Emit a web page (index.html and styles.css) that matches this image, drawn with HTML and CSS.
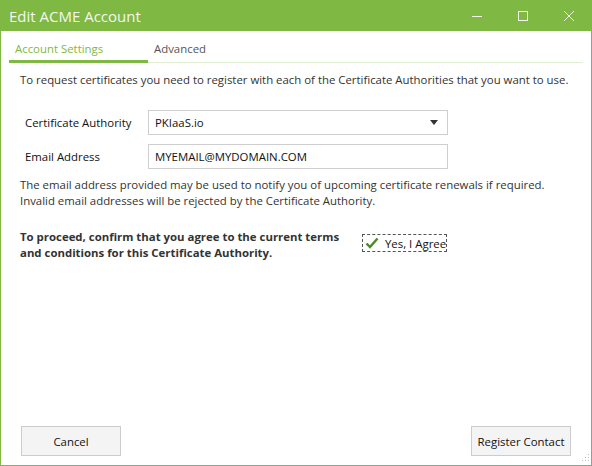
FILE: index.html
```html
<!DOCTYPE html>
<html lang="en">
<head>
    <meta charset="UTF-8">
    <meta name="viewport" content="width=device-width, initial-scale=1.0">
    <title>Edit ACME Account</title>
    <link rel="stylesheet" href="styles.css">
</head>
<body>

<div id="window">
    <div id="titlebar">
        <div class="title">Edit ACME Account</div>
        <div class="winbtns">
            <svg class="winbtn" width="12" height="12" viewBox="0 0 12 12"><path d="M1 6.5h10" stroke="#f3f7ee" stroke-width="1"/></svg>
            <svg class="winbtn" width="12" height="12" viewBox="0 0 12 12"><rect x="1.5" y="1.5" width="9" height="9" fill="none" stroke="#f3f7ee" stroke-width="1"/></svg>
            <svg class="winbtn" width="12" height="12" viewBox="0 0 12 12"><path d="M1 1l10 10M11 1L1 11" stroke="#f3f7ee" stroke-width="1"/></svg>
        </div>
    </div>

    <div id="tabs">
        <div class="tab active">Account Settings</div>
        <div class="tab">Advanced</div>
    </div>

    <div id="content">
        <div class="intro">
            To request certificates you need to register with each of the Certificate Authorities that you want to use.
        </div>

        <div class="form">
            <div class="row">
                <div class="lable">Certificate Authority</div>
                <div class="field select">
                    <span>PKIaaS.io</span>
                    <svg width="8" height="5" viewBox="0 0 8 5"><path d="M0 0h8L4 5z" fill="#333"/></svg>
                </div>
            </div>
            <div class="row">
                <div class="lable">Email Address</div>
                <div class="field">MYEMAIL@MYDOMAIN.COM</div>
            </div>
        </div>

        <div class="help">
            The email address provided may be used to notify you of upcoming certificate renewals if required.<br>
            Invalid email addresses will be rejected by the Certificate Authority.
        </div>

        <div class="agree">
            <div class="agree_text">
                To proceed, confirm that you agree to the current terms<br>
                and conditions for this Certificate Authority.
            </div>
            <div class="check">
                <svg width="14" height="12" viewBox="0 0 14 12"><path d="M1.5 6.5l3.5 3.5 7.5-8.5" fill="none" stroke="#4a8a22" stroke-width="2.4"/></svg>
                <span>Yes, I Agree</span>
            </div>
        </div>
    </div>

    <div id="buttons">
        <button>Cancel</button>
        <button>Register Contact</button>
    </div>

    <svg id="grip" width="10" height="10" viewBox="0 0 10 10">
        <rect x="8" y="0" width="1" height="1" fill="#bbb"/>
        <rect x="5" y="3" width="1" height="1" fill="#bbb"/>
        <rect x="8" y="3" width="1" height="1" fill="#bbb"/>
        <rect x="2" y="6" width="1" height="1" fill="#bbb"/>
        <rect x="5" y="6" width="1" height="1" fill="#bbb"/>
        <rect x="8" y="6" width="1" height="1" fill="#bbb"/>
    </svg>
</div>

</body>
</html>
```

FILE: styles.css
```css
body{
    margin: 0;
    font-family: "Open Sans", "Noto Sans", sans-serif;
    font-size: 11.4px;
    color: #333;
}
#window{
    position: relative;
    width: 592px;
    height: 466px;
    box-sizing: border-box;
    border: 1px #7fb843 solid;
    border-top: none;
    display: flex;
    flex-direction: column;
    background-color: white;
}
#titlebar{
    height: 31px;
    margin: 0 -1px;
    background-color: #7fb843;
    display: flex;
    align-items: center;
    justify-content: space-between;
}
.title{
    color: #f3f7ee;
    font-size: 15px;
    margin-left: 9px;
}
.winbtns{
    display: flex;
    gap: 34px;
    margin-right: 17px;
}
#tabs{
    display: flex;
    margin: 8px 8px 0 8px;
    border-bottom: 1px #e1efd3 solid;
}
.tab{
    padding: 2px 6px 4px 6px;
    color: #555;
    width: 127px;
    margin-bottom: -1px;
}
.tab.active{
    color: #7fb843;
    border-bottom: 3px #7fb843 solid;
}
#content{
    padding: 0 19px;
}
.intro{
    margin-top: 9px;
    white-space: nowrap;
}
.form{
    margin-top: 23px;
    display: flex;
    flex-direction: column;
    gap: 9px;
    padding-left: 5px;
}
.row{
    display: flex;
    align-items: center;
}
.lable{
    width: 123px;
    color: #111;
}
.field{
    width: 300px;
    height: 25px;
    box-sizing: border-box;
    border: 1px #cfcfcf solid;
    padding: 0 6px;
    display: flex;
    align-items: center;
    justify-content: space-between;
    color: #111;
}
.select svg{
    margin-right: 3px;
}
.help{
    margin-top: 8px;
    line-height: 16px;
    white-space: nowrap;
}
.agree{
    margin-top: 20px;
    display: flex;
    align-items: flex-start;
}
.agree_text{
    font-weight: bold;
    line-height: 16px;
    width: 342px;
    white-space: nowrap;
}
.check{
    margin-top: 5px;
    border: 1px #555 dashed;
    display: flex;
    align-items: center;
    gap: 6px;
    height: 16px;
    padding: 0 0 0 2px;
    color: #111;
}
#buttons{
    margin-top: auto;
    display: flex;
    justify-content: space-between;
    padding: 0 20px 9px 20px;
}
button{
    font-family: inherit;
    font-size: 11.4px;
    color: #111;
    background-color: #f4f4f4;
    border: 1px #ccc solid;
    height: 30px;
    min-width: 100px;
    padding: 0 5px;
}
#grip{
    position: absolute;
    right: 1px;
    bottom: 1px;
}
```
